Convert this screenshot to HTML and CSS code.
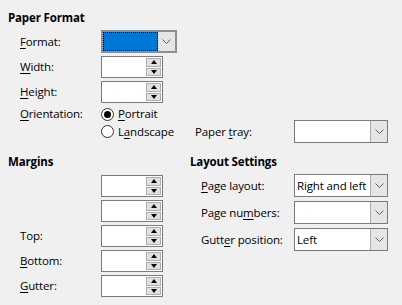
FILE: index.html
```html
<!DOCTYPE html>
<html lang="en">
<head>
    <meta charset="UTF-8">
    <title>Page Style</title>
    <link rel="stylesheet" href="styles.css">
</head>
<body>
    <section class="paper">
        <h3 class="group-title">Paper Format</h3>
        <div class="form-grid">
            <label class="lbl"><u>F</u>ormat:</label>
            <div class="combo combo-format focused">
                <span class="combo-value"></span>
                <span class="combo-btn"><svg width="9" height="5" viewBox="0 0 9 5"><polyline points="0.5,0.5 4.5,4.5 8.5,0.5" fill="none" stroke="#606060" stroke-width="1"/></svg></span>
            </div>

            <label class="lbl"><u>W</u>idth:</label>
            <div class="spin"><span class="spin-value"></span><span class="spin-btns"><span class="up"></span><span class="down"></span></span></div>

            <label class="lbl"><u>H</u>eight:</label>
            <div class="spin"><span class="spin-value"></span><span class="spin-btns"><span class="up"></span><span class="down"></span></span></div>

            <label class="lbl"><u>O</u>rientation:</label>
            <div class="radio-row">
                <span class="radio checked"></span><span><u>P</u>ortrait</span>
            </div>

            <span class="lbl"></span>
            <div class="tray-row">
                <div class="radio-row radio-wide">
                    <span class="radio"></span><span>L<u>a</u>ndscape</span>
                </div>
                <label class="tray-lbl">Paper <u>t</u>ray:</label>
                <div class="combo">
                    <span class="combo-value"></span>
                    <span class="combo-btn"><svg width="9" height="5" viewBox="0 0 9 5"><polyline points="0.5,0.5 4.5,4.5 8.5,0.5" fill="none" stroke="#606060" stroke-width="1"/></svg></span>
                </div>
            </div>
        </div>
    </section>

    <div class="lower">
        <section class="margins">
            <h3 class="group-title">Margins</h3>
            <div class="form-grid margin-grid">
                <span class="lbl"></span>
                <div class="spin"><span class="spin-value"></span><span class="spin-btns"><span class="up"></span><span class="down"></span></span></div>
                <span class="lbl"></span>
                <div class="spin"><span class="spin-value"></span><span class="spin-btns"><span class="up"></span><span class="down"></span></span></div>
                <label class="lbl">Top:</label>
                <div class="spin"><span class="spin-value"></span><span class="spin-btns"><span class="up"></span><span class="down"></span></span></div>
                <label class="lbl"><u>B</u>ottom:</label>
                <div class="spin"><span class="spin-value"></span><span class="spin-btns"><span class="up"></span><span class="down"></span></span></div>
                <label class="lbl"><u>G</u>utter:</label>
                <div class="spin"><span class="spin-value"></span><span class="spin-btns"><span class="up"></span><span class="down"></span></span></div>
            </div>
        </section>

        <section class="layout">
            <h3 class="group-title">Layout Settings</h3>
            <div class="form-grid layout-grid">
                <label class="lbl"><u>P</u>age layout:</label>
                <div class="combo">
                    <span class="combo-value">Right and left</span>
                    <span class="combo-btn"><svg width="9" height="5" viewBox="0 0 9 5"><polyline points="0.5,0.5 4.5,4.5 8.5,0.5" fill="none" stroke="#606060" stroke-width="1"/></svg></span>
                </div>
                <label class="lbl">Page nu<u>m</u>bers:</label>
                <div class="combo">
                    <span class="combo-value"></span>
                    <span class="combo-btn"><svg width="9" height="5" viewBox="0 0 9 5"><polyline points="0.5,0.5 4.5,4.5 8.5,0.5" fill="none" stroke="#606060" stroke-width="1"/></svg></span>
                </div>
                <label class="lbl">Gutt<u>e</u>r position:</label>
                <div class="combo">
                    <span class="combo-value">Left</span>
                    <span class="combo-btn"><svg width="9" height="5" viewBox="0 0 9 5"><polyline points="0.5,0.5 4.5,4.5 8.5,0.5" fill="none" stroke="#606060" stroke-width="1"/></svg></span>
                </div>
            </div>
        </section>
    </div>
</body>
</html>
```

FILE: styles.css
```css
body {
    margin: 0;
    padding: 10px 0 0 8px;
    width: 402px;
    height: 305px;
    box-sizing: border-box;
    background-color: #f0f0f0;
    color: #000;
    font-family: "Open Sans", "Noto Sans", sans-serif;
    font-size: 11.5px;
    letter-spacing: -0.15px;
    overflow: hidden;
}

.group-title {
    margin: 0;
    height: 16px;
    line-height: 16px;
    font-size: 11.5px;
    font-weight: bold;
}

u {
    text-decoration-thickness: 1px;
    text-underline-offset: 2px;
}

.form-grid {
    display: grid;
    grid-template-columns: 81px auto;
    align-items: center;
    row-gap: 3px;
    padding-left: 12px;
    margin-top: 4px;
}

.lbl {
    line-height: 16px;
    white-space: nowrap;
}

/* combo box */
.combo {
    display: flex;
    width: 94px;
    height: 23px;
    border: 1px solid #7a7a7a;
    background-color: #fff;
    box-sizing: border-box;
}

.combo-value {
    flex: 1;
    padding-left: 2px;
    line-height: 21px;
    white-space: nowrap;
    overflow: hidden;
}

.combo-btn {
    width: 16px;
    display: flex;
    align-items: center;
    justify-content: center;
    background-color: #e5e5e5;
    border-left: 1px solid #adadad;
}

.combo-format {
    width: 76px;
    border: 2px solid #8f8f8f;
}

.combo-format .combo-btn {
    width: 17px;
    border-left: none;
}

.focused .combo-value {
    background-color: #0078d7;
    outline: 1px dotted #000;
    outline-offset: -1px;
}

/* spin field */
.spin {
    display: flex;
    width: 62px;
    height: 22px;
    border: 1px solid #7a7a7a;
    background-color: #fff;
    box-sizing: border-box;
    padding: 1px;
}

.spin-value {
    flex: 1;
}

.spin-btns {
    width: 15px;
    display: flex;
    flex-direction: column;
    gap: 1px;
}

.spin-btns span {
    flex: 1;
    background-color: #e1e1e1;
    border: 1px solid #adadad;
    position: relative;
}

.spin-btns span::after {
    content: "";
    position: absolute;
    left: 50%;
    top: 50%;
    margin-left: -3px;
    border-left: 3px solid transparent;
    border-right: 3px solid transparent;
}

.spin-btns .up::after {
    margin-top: -2px;
    border-bottom: 4px solid #000;
}

.spin-btns .down::after {
    margin-top: -2px;
    border-top: 4px solid #000;
}

/* radio buttons */
.radio-row {
    display: flex;
    align-items: center;
    gap: 4px;
    height: 14px;
    line-height: 16px;
}

.radio-wide {
    width: 94px;
}

.radio {
    width: 13px;
    height: 13px;
    border: 1px solid #333;
    border-radius: 50%;
    background-color: #fff;
    box-sizing: border-box;
    display: flex;
    align-items: center;
    justify-content: center;
}

.radio.checked::after {
    content: "";
    width: 7px;
    height: 7px;
    border-radius: 50%;
    background-color: #000;
}

.tray-row {
    display: flex;
    align-items: center;
    height: 23px;
    margin-top: -5px;
}

.tray-lbl {
    width: 99px;
    white-space: nowrap;
}

/* lower groups */
.lower {
    display: flex;
    margin-top: 11px;
}

.margins {
    width: 182px;
}

.margin-grid {
    margin-top: 5px;
}

.layout-grid {
    grid-template-columns: 93px auto;
    padding-left: 11px;
    row-gap: 4px;
}
```
